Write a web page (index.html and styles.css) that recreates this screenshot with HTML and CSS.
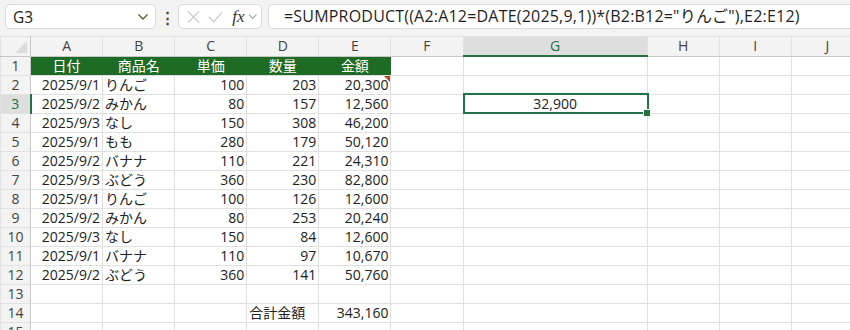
FILE: index.html
```html
<!DOCTYPE html>
<html lang="ja">

<head>
    <meta charset="UTF-8">
    <title>Sheet1</title>
    <link rel="stylesheet" href="styles.css">
</head>

<body>

    <!-- Formula bar -->
    <div class="formula-bar">
        <div class="name-box">
            <span>G3</span>
            <svg class="chev" width="12" height="8" viewBox="0 0 12 8"><path d="M1.5 1.5 L6 6 L10.5 1.5" fill="none" stroke="#5b5b3a" stroke-width="1.4"/></svg>
        </div>
        <div class="dots">⋮</div>
        <div class="fx-box">
            <svg width="16" height="16" viewBox="0 0 16 16"><path d="M2 2 L14 14 M14 2 L2 14" stroke="#c4c4c4" stroke-width="1.2"/></svg>
            <svg width="16" height="16" viewBox="0 0 16 16"><path d="M1 8 L6 13 L15 3" fill="none" stroke="#c4c4c4" stroke-width="1.2"/></svg>
            <span class="fx">fx</span>
            <svg width="10" height="7" viewBox="0 0 10 7"><path d="M1 1.5 L5 5.5 L9 1.5" fill="none" stroke="#a8a8a8" stroke-width="1.2"/></svg>
        </div>
        <div class="formula-input">=SUMPRODUCT((A2:A12=DATE(2025,9,1))*(B2:B12="りんご"),E2:E12)</div>
    </div>

    <!-- Grid -->
    <table class="sheet">
        <colgroup>
            <col class="c-rh">
            <col class="c-std"><col class="c-std"><col class="c-std"><col class="c-std"><col class="c-std"><col class="c-std">
            <col class="c-wide">
            <col class="c-std"><col class="c-std"><col class="c-std">
        </colgroup>
        <thead>
            <tr>
                <th class="corner"><span class="tri"></span></th>
                <th>A</th><th>B</th><th>C</th><th>D</th><th>E</th><th>F</th>
                <th class="active-col">G</th>
                <th>H</th><th>I</th><th>J</th>
            </tr>
        </thead>
        <tbody>
            <tr>
                <th class="rh">1</th>
                <td class="hd">日付</td><td class="hd">商品名</td><td class="hd">単価</td><td class="hd">数量</td><td class="hd">金額</td>
                <td></td><td></td><td></td><td></td><td></td>
            </tr>
            <tr>
                <th class="rh">2</th>
                <td class="num">2025/9/1</td><td>りんご</td><td class="num">100</td><td class="num">203</td><td class="num note">20,300</td>
                <td></td><td></td><td></td><td></td><td></td>
            </tr>
            <tr>
                <th class="rh active-row">3</th>
                <td class="num">2025/9/2</td><td>みかん</td><td class="num">80</td><td class="num">157</td><td class="num">12,560</td>
                <td></td><td class="selected">32,900</td><td></td><td></td><td></td>
            </tr>
            <tr>
                <th class="rh">4</th>
                <td class="num">2025/9/3</td><td>なし</td><td class="num">150</td><td class="num">308</td><td class="num">46,200</td>
                <td></td><td></td><td></td><td></td><td></td>
            </tr>
            <tr>
                <th class="rh">5</th>
                <td class="num">2025/9/1</td><td>もも</td><td class="num">280</td><td class="num">179</td><td class="num">50,120</td>
                <td></td><td></td><td></td><td></td><td></td>
            </tr>
            <tr>
                <th class="rh">6</th>
                <td class="num">2025/9/2</td><td>バナナ</td><td class="num">110</td><td class="num">221</td><td class="num">24,310</td>
                <td></td><td></td><td></td><td></td><td></td>
            </tr>
            <tr>
                <th class="rh">7</th>
                <td class="num">2025/9/3</td><td>ぶどう</td><td class="num">360</td><td class="num">230</td><td class="num">82,800</td>
                <td></td><td></td><td></td><td></td><td></td>
            </tr>
            <tr>
                <th class="rh">8</th>
                <td class="num">2025/9/1</td><td>りんご</td><td class="num">100</td><td class="num">126</td><td class="num">12,600</td>
                <td></td><td></td><td></td><td></td><td></td>
            </tr>
            <tr>
                <th class="rh">9</th>
                <td class="num">2025/9/2</td><td>みかん</td><td class="num">80</td><td class="num">253</td><td class="num">20,240</td>
                <td></td><td></td><td></td><td></td><td></td>
            </tr>
            <tr>
                <th class="rh">10</th>
                <td class="num">2025/9/3</td><td>なし</td><td class="num">150</td><td class="num">84</td><td class="num">12,600</td>
                <td></td><td></td><td></td><td></td><td></td>
            </tr>
            <tr>
                <th class="rh">11</th>
                <td class="num">2025/9/1</td><td>バナナ</td><td class="num">110</td><td class="num">97</td><td class="num">10,670</td>
                <td></td><td></td><td></td><td></td><td></td>
            </tr>
            <tr>
                <th class="rh">12</th>
                <td class="num">2025/9/2</td><td>ぶどう</td><td class="num">360</td><td class="num">141</td><td class="num">50,760</td>
                <td></td><td></td><td></td><td></td><td></td>
            </tr>
            <tr>
                <th class="rh">13</th>
                <td></td><td></td><td></td><td></td><td></td>
                <td></td><td></td><td></td><td></td><td></td>
            </tr>
            <tr>
                <th class="rh">14</th>
                <td></td><td></td><td></td><td>合計金額</td><td class="num">343,160</td>
                <td></td><td></td><td></td><td></td><td></td>
            </tr>
            <tr>
                <th class="rh">15</th>
                <td></td><td></td><td></td><td></td><td></td>
                <td></td><td></td><td></td><td></td><td></td>
            </tr>
        </tbody>
    </table>

</body>

</html>
```

FILE: styles.css
```css
/* Spreadsheet view */
body {
    margin: 0;
    background-color: #f3f3f3;
    font-family: "Open Sans", "Noto Sans CJK JP", sans-serif;
    color: #222;
    overflow: hidden;
}

/* Top formula bar */
.formula-bar {
    display: flex;
    align-items: center;
    height: 36px;
    padding: 0 0 0 5px;
    box-sizing: border-box;
}

.name-box {
    display: flex;
    align-items: center;
    justify-content: space-between;
    width: 151px;
    height: 25px;
    box-sizing: border-box;
    padding: 0 6px 0 7px;
    background-color: white;
    border: 1px solid #dadada;
    border-radius: 5px;
    font-size: 15.5px;
    color: #222;
    margin-top: -3px;
}

.dots {
    width: 22px;
    text-align: center;
    font-size: 15px;
    font-weight: bold;
    color: #444;
    margin-top: -3px;
}

.fx-box {
    display: flex;
    align-items: center;
    gap: 7px;
    width: 84px;
    height: 25px;
    box-sizing: border-box;
    padding: 0 4px 0 7px;
    background-color: white;
    border: 1px solid #dadada;
    border-radius: 5px;
    margin-top: -3px;
}

.fx {
    font-family: "Liberation Serif", serif;
    font-style: italic;
    font-size: 17px;
    color: #333;
    margin-left: 2px;
    margin-right: -4px;
}

.formula-input {
    flex: 1;
    height: 25px;
    box-sizing: border-box;
    margin-left: 6px;
    margin-top: -3px;
    padding: 0 0 0 15px;
    background-color: white;
    border: 1px solid #dadada;
    border-right: none;
    border-radius: 5px 0 0 5px;
    font-size: 16px;
    letter-spacing: 0.2px;
    line-height: 23px;
    color: #1f1f1f;
    white-space: nowrap;
}

/* Grid */
.sheet {
    border-collapse: collapse;
    table-layout: fixed;
    width: 864px;
    font-size: 14px;
}

.c-rh { width: 30px; }
.c-std { width: 72px; }
.c-wide { width: 184px; }

.sheet th,
.sheet td {
    height: 18px;
    padding: 0 2px;
    line-height: 18px;
    border: 1px solid #e0e0e0;
    white-space: nowrap;
    overflow: hidden;
}

.sheet thead th {
    background-color: #f3f3f3;
    font-weight: normal;
    color: #444;
    border-color: #e2e2e2;
    border-bottom: 1px solid #c8c8c8;
}

.sheet thead th.corner {
    position: relative;
    border-right: 1px solid #c8c8c8;
}

.tri {
    position: absolute;
    right: 3px;
    bottom: 3px;
    width: 0;
    height: 0;
    border-left: 12px solid transparent;
    border-bottom: 12px solid #dcdcdc;
}

.sheet thead th.active-col {
    background-color: #dedede;
    color: #217346;
    border-bottom: 2px solid #217346;
}

.sheet th.rh {
    background-color: #f3f3f3;
    font-weight: normal;
    color: #444;
    text-align: center;
    border-color: #e2e2e2;
    border-right: 1px solid #c8c8c8;
}

.sheet th.active-row {
    background-color: #dedede;
    color: #217346;
    border-right: 2px solid #217346;
}

.sheet td {
    background-color: white;
    text-align: left;
}

.sheet td.num {
    text-align: right;
}

.sheet td.hd {
    background-color: #1d6b24;
    color: white;
    text-align: center;
    border-color: #1d6b24;
    border-bottom-color: #e0e0e0;
}

/* Comment marker */
.sheet td.note {
    position: relative;
}

.sheet td.note::after {
    content: "";
    position: absolute;
    top: 0;
    right: 0;
    border-left: 6px solid transparent;
    border-top: 6px solid #b5461b;
}

/* Active cell */
.sheet td.selected {
    position: relative;
    text-align: center;
    overflow: visible;
}

.sheet td.selected::before {
    content: "";
    position: absolute;
    top: -2px;
    left: -1px;
    right: -2px;
    bottom: -1px;
    border: 2px solid #217346;
}

.sheet td.selected::after {
    content: "";
    position: absolute;
    right: -4px;
    bottom: -4px;
    width: 6px;
    height: 6px;
    background-color: #217346;
    border: 1px solid white;
    z-index: 1;
}
```
